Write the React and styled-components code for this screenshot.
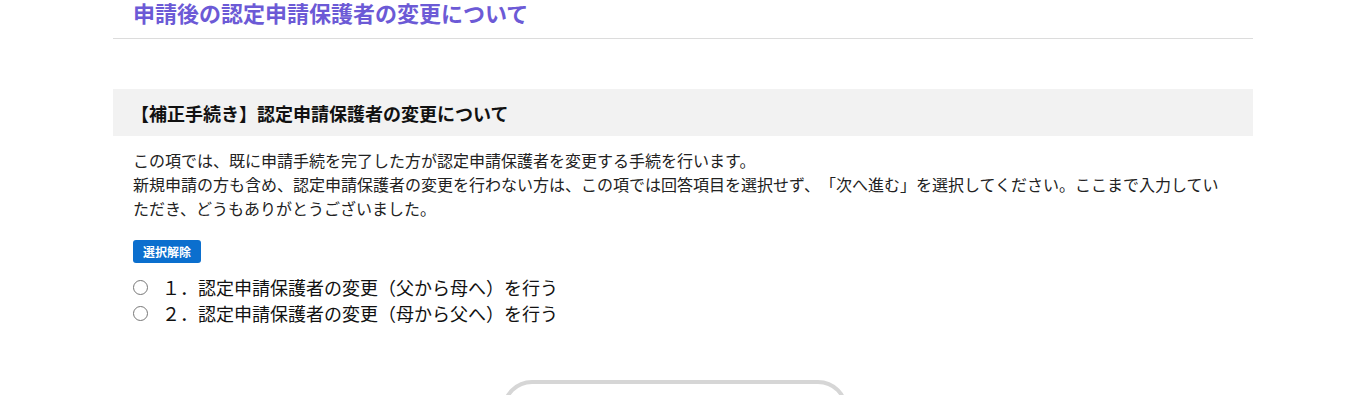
import styled, { createGlobalStyle } from 'styled-components'

const GlobalStyle = createGlobalStyle`
  html, body {
    margin: 0;
    padding: 0;
    background: #fff;
    font-family: "Noto Sans CJK JP", "Noto Sans", sans-serif;
    color: #111;
    text-spacing-trim: space-all;
  }
  body {
    padding-left: 16px;
  }
`

const Page = styled.main`
  width: 1140px;
  margin: 0 auto;
  box-sizing: border-box;
`

const PageTitle = styled.h1`
  margin: 0;
  padding: 0 0 8px 20px;
  margin-top: -6px;
  font-size: 22px;
  line-height: 36px;
  font-weight: bold;
  color: #6c5ad6;
  border-bottom: 1px solid #dcdcdc;
`

const Section = styled.section`
  margin-top: 50px;
`

const SectionHeader = styled.h2`
  margin: 0;
  background: #f2f2f2;
  height: 47px;
  display: flex;
  align-items: center;
  padding: 0 20px 0 18px;
  font-size: 18px;
  font-weight: bold;
  color: #111;
`

const SectionBody = styled.div`
  padding: 12px 20px 0 20px;
`

const Lead = styled.p`
  margin: 0;
  font-size: 16px;
  line-height: 24px;
  color: #222;
`

const ClearButton = styled.button`
  margin-top: 20px;
  display: block;
  height: 23px;
  padding: 0 10px;
  border: none;
  border-radius: 3px;
  background: #0b6fce;
  color: #fff;
  font-family: inherit;
  font-size: 12px;
  font-weight: bold;
  cursor: pointer;
`

const Options = styled.ul`
  list-style: none;
  margin: 11px 0 0 0;
  padding: 0;
`

const Option = styled.li`
  display: flex;
  align-items: center;
  height: 26px;
`

const Radio = styled.input.attrs({ type: 'radio' })`
  appearance: none;
  margin: 0 14px 0 0;
  width: 15px;
  height: 15px;
  border: 1px solid #777;
  border-radius: 50%;
  background: #fff;
  flex: none;
`

const OptionLabel = styled.label`
  font-size: 18px;
  color: #111;
`

const Footer = styled.div`
  display: flex;
  justify-content: center;
  margin-top: 54px;
  padding-right: 16px;
`

const NextButton = styled.button`
  width: 346px;
  height: 60px;
  border: 4px solid #d6d6d6;
  border-radius: 30px;
  background: #fff;
`

const options = [
  '１．認定申請保護者の変更（父から母へ）を行う',
  '２．認定申請保護者の変更（母から父へ）を行う',
]

const App = () => {
  return (
    <>
      <GlobalStyle />
      <Page>
        <PageTitle>申請後の認定申請保護者の変更について</PageTitle>
        <Section>
          <SectionHeader>【補正手続き】認定申請保護者の変更について</SectionHeader>
          <SectionBody>
            <Lead>
              この項では、既に申請手続を完了した方が認定申請保護者を変更する手続を行います。<br />
              新規申請の方も含め、認定申請保護者の変更を行わない方は、この項では回答項目を選択せず、「次へ進む」を選択してください。ここまで入力していただき、どうもありがとうございました。
            </Lead>
            <ClearButton type="button">選択解除</ClearButton>
            <Options>
              {options.map((text, i) => (
                <Option key={i}>
                  <Radio name="change" id={`opt${i}`} />
                  <OptionLabel htmlFor={`opt${i}`}>{text}</OptionLabel>
                </Option>
              ))}
            </Options>
          </SectionBody>
        </Section>
        <Footer>
          <NextButton type="button" />
        </Footer>
      </Page>
    </>
  )
}

export default App
